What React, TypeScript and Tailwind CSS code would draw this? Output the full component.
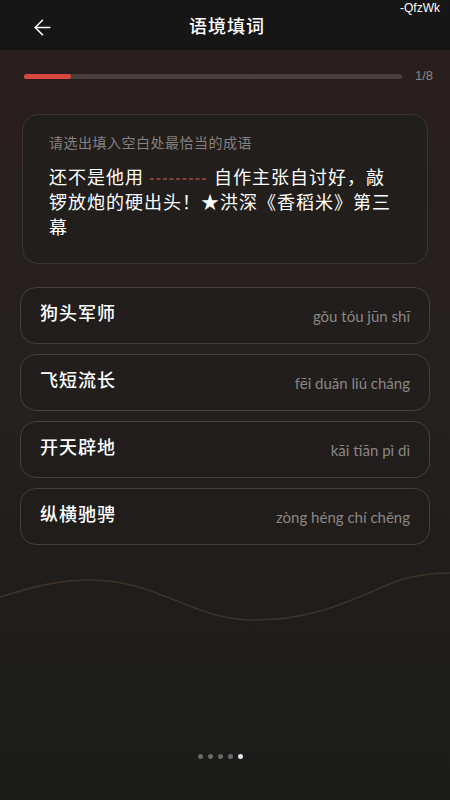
import { ArrowLeft } from 'lucide-react';

const options = [
  { word: '狗头军师', pinyin: 'gǒu tóu jūn shī' },
  { word: '飞短流长', pinyin: 'fēi duǎn liú cháng' },
  { word: '开天辟地', pinyin: 'kāi tiān pì dì' },
  { word: '纵横驰骋', pinyin: 'zòng héng chí chěng' },
];

const cjk = "font-['Noto_Sans_CJK_SC',sans-serif]";

export default function App() {
  return (
    <div className={`relative w-[450px] h-[800px] overflow-hidden bg-gradient-to-b from-[#2a1e1d] via-[#24211f] to-[#1b1b19] ${cjk}`}>
      {/* background wave */}
      <svg className="absolute left-0 top-[560px] w-[450px] h-[80px]" viewBox="0 0 450 80" fill="none">
        <path d="M0 37 C 35 26, 60 20, 90 20 C 160 20, 190 60, 255 60 C 320 60, 360 35, 400 20 C 420 14, 435 13, 450 13" stroke="#3d3229" strokeWidth="1.6" />
      </svg>

      {/* header */}
      <div className="relative h-[50px] bg-[#161616] flex items-center justify-center">
        <button className="absolute left-[30px] top-[15px] text-white">
          <ArrowLeft size={25} strokeWidth={1.5} />
        </button>
        <h1 className="text-white text-[18px] font-medium tracking-[1px] ml-[4px]">语境填词</h1>
        <span className="absolute right-[10px] top-[0px] text-[12px] leading-[16px] text-white font-['Liberation_Sans',sans-serif]">-QfzWk</span>
      </div>

      {/* progress */}
      <div className="relative flex items-center h-[20px] pl-[24px] pr-[17px] mt-[16px]">
        <div className="flex-1 h-[5px] rounded-full bg-[#4a3f3d] mr-[13px]">
          <div className="w-[47px] h-[5px] rounded-full bg-[#d8483f]" />
        </div>
        <span className="text-[13px] text-[#8b8482] font-['Liberation_Sans',sans-serif]">1/8</span>
      </div>

      {/* question card */}
      <div className="relative mx-[22px] mt-[28px] h-[150px] rounded-[16px] border border-[#3a3533] bg-[#211e1c]/80 pl-[26px] pt-[18px]">
        <p className="text-[14px] tracking-[0.5px] text-[#868180] leading-[18px]">请选出填入空白处最恰当的成语</p>
        <div className="mt-[13px] text-[18px] leading-[25px] tracking-[1px] text-white whitespace-nowrap">
          <div>
            还不是他用
            <svg className="inline-block align-middle mx-[6px]" width="58" height="4" viewBox="0 0 58 4">
              <line x1="0" y1="2" x2="58" y2="2" stroke="#a24b3c" strokeWidth="1.6" strokeDasharray="4 2.5" />
            </svg>
            自作主张自讨好，敲
          </div>
          <div>锣放炮的硬出头！★洪深《香稻米》第三</div>
          <div>幕</div>
        </div>
      </div>

      {/* options */}
      <div className="relative mx-[20px] mt-[23px] flex flex-col gap-[10px]">
        {options.map((o) => (
          <div
            key={o.word}
            className="h-[57px] rounded-[16px] border-[1.5px] border-[#463f3a] bg-[#1f1c1a]/60 flex items-center justify-between pl-[19px] pr-[19px]"
          >
            <span className="text-white text-[18px] font-medium tracking-[1px] -mt-[6px]">{o.word}</span>
            <span className="text-[#8c8682] text-[15px] mt-[2px] font-['Lato',sans-serif]">{o.pinyin}</span>
          </div>
        ))}
      </div>

      {/* pager dots */}
      <div className="absolute left-0 right-0 top-[754px] flex justify-center gap-[5px] pr-[10px]">
        <span className="w-[5px] h-[5px] rounded-full bg-[#6a6866]" />
        <span className="w-[5px] h-[5px] rounded-full bg-[#6a6866]" />
        <span className="w-[5px] h-[5px] rounded-full bg-[#6a6866]" />
        <span className="w-[5px] h-[5px] rounded-full bg-[#6a6866]" />
        <span className="w-[5px] h-[5px] rounded-full bg-[#e6e6e6]" />
      </div>
    </div>
  );
}
